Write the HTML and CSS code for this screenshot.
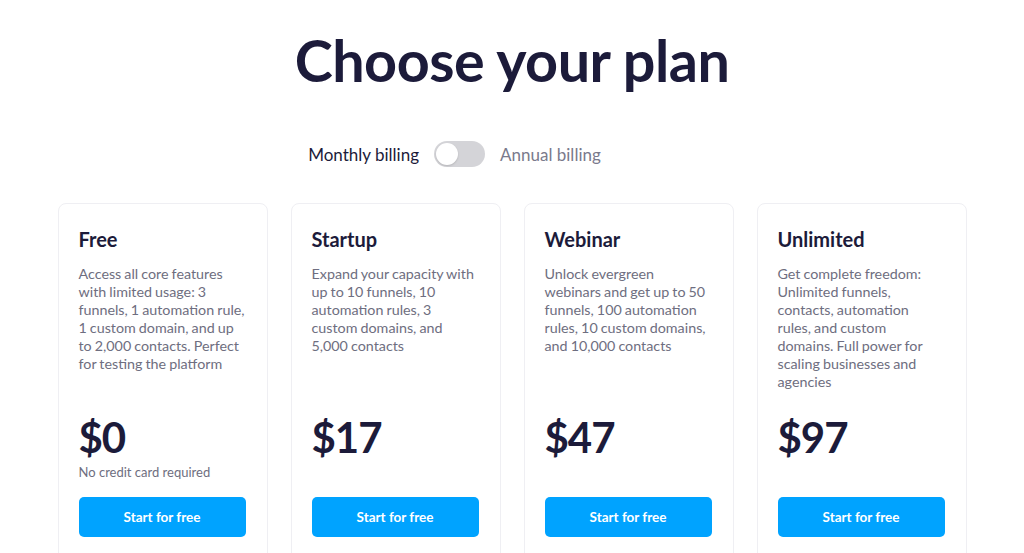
FILE: index.html
```html
<!DOCTYPE html>
<html lang="en">
<head>
  <meta charset="UTF-8" />
  <meta name="viewport" content="width=device-width, initial-scale=1.0"/>
  <title>Choose your plan</title>
  <link rel="stylesheet" href="styles.css">
</head>
<body>
  <h1 class="title">Choose your plan</h1>

  <!-- Billing toggle -->
  <div class="billing">
    <span class="billing-label active">Monthly billing</span>
    <button class="switch" aria-label="Toggle billing"><span class="knob"></span></button>
    <span class="billing-label">Annual billing</span>
  </div>

  <!-- Plans -->
  <div class="plans">
    <div class="card">
      <h2 class="plan-name">Free</h2>
      <p class="plan-desc">Access all core features with limited usage: 3 funnels, 1 automation rule, 1 custom domain, and up to 2,000 contacts. Perfect for testing the platform</p>
      <div class="price">$0</div>
      <div class="price-note">No credit card required</div>
      <button class="start-btn">Start for free</button>
    </div>

    <div class="card">
      <h2 class="plan-name">Startup</h2>
      <p class="plan-desc">Expand your capacity with up to 10 funnels, 10 automation rules, 3 custom domains, and 5,000 contacts</p>
      <div class="price">$17</div>
      <div class="price-note"></div>
      <button class="start-btn">Start for free</button>
    </div>

    <div class="card">
      <h2 class="plan-name">Webinar</h2>
      <p class="plan-desc">Unlock evergreen webinars and get up to 50 funnels, 100 automation rules, 10 custom domains, and 10,000 contacts</p>
      <div class="price">$47</div>
      <div class="price-note"></div>
      <button class="start-btn">Start for free</button>
    </div>

    <div class="card">
      <h2 class="plan-name">Unlimited</h2>
      <p class="plan-desc">Get complete freedom: Unlimited funnels, contacts, automation rules, and custom domains. Full power for scaling businesses and agencies</p>
      <div class="price">$97</div>
      <div class="price-note"></div>
      <button class="start-btn">Start for free</button>
    </div>
  </div>
</body>
</html>
```

FILE: styles.css
```css
body {
  margin: 0;
  font-family: 'Lato', 'Noto Sans', sans-serif;
  background-color: #ffffff;
  color: #1c1b3a;
  display: flex;
  flex-direction: column;
  align-items: center;
  overflow: hidden;
}

.title {
  margin: 22px 0 0;
  font-size: 57.5px;
  font-weight: 700;
  line-height: 76px;
  letter-spacing: -0.5px;
  color: #1c1b3a;
}

.billing {
  display: flex;
  align-items: center;
  gap: 15px;
  margin-top: 43px;
  margin-right: 115px;
}

.billing-label {
  font-size: 17px;
  color: #7a7a8c;
}

.billing-label.active {
  color: #1c1b3a;
}

.switch {
  width: 51px;
  height: 26px;
  padding: 2px;
  border: none;
  border-radius: 13px;
  background-color: #d4d4d8;
  display: flex;
  align-items: center;
  cursor: pointer;
}

.knob {
  width: 22px;
  height: 22px;
  border-radius: 50%;
  background-color: #ffffff;
  box-shadow: 0 1px 2px rgba(0, 0, 0, 0.15);
}

.plans {
  display: grid;
  grid-template-columns: repeat(4, 210px);
  gap: 23px;
  margin-top: 36px;
}

.card {
  display: flex;
  flex-direction: column;
  padding: 23px 21px 40px 20px;
  border: 1px solid #efeff3;
  border-radius: 8px;
}

.plan-name {
  margin: 0;
  font-size: 20px;
  font-weight: 700;
  line-height: 24px;
  color: #1c1b3a;
}

.plan-desc {
  min-height: 126px;
  margin: 14px 0 21px;
  font-size: 14.3px;
  line-height: 18px;
  word-spacing: -0.6px;
  color: #6e6e80;
}

.price {
  font-size: 42px;
  font-weight: 700;
  line-height: 50px;
  letter-spacing: -1px;
  color: #1c1b3a;
}

.price-note {
  height: 18px;
  margin-top: 1px;
  font-size: 13px;
  line-height: 18px;
  color: #6e6e80;
}

.start-btn {
  margin-top: 16px;
  height: 40px;
  border: none;
  border-radius: 5px;
  background-color: #00a3ff;
  color: #ffffff;
  font-family: inherit;
  font-size: 13.5px;
  font-weight: 700;
  cursor: pointer;
}
```
